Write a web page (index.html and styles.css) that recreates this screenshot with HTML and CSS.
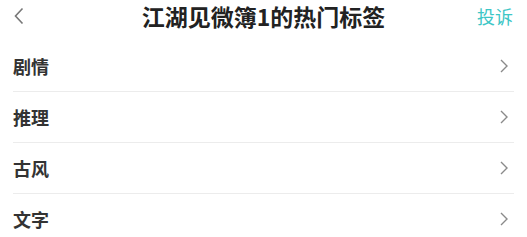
FILE: index.html
```html
<!DOCTYPE html>
<html lang="zh-CN">
<head>
    <meta charset="UTF-8">
    <meta name="viewport" content="width=device-width, initial-scale=1.0">
    <title>热门标签</title>
    <link rel="stylesheet" href="styles.css">
</head>
<body>

    <!-- Top bar -->
    <div class="header">
        <a class="back" href="#">
            <svg width="10" height="18" viewBox="0 0 10 18"><path d="M8.5 1.5 L1.5 9 L8.5 16.5" fill="none" stroke="#777" stroke-width="1.6"/></svg>
        </a>
        <h1 class="title">江湖见微簿1的热门标签</h1>
        <a class="report" href="#">投诉</a>
    </div>

    <!-- Tag list -->
    <ul class="tag-list">
        <li class="tag-row"><span>剧情</span><svg class="arrow" width="8" height="14" viewBox="0 0 8 14"><path d="M1 1 L7 7 L1 13" fill="none" stroke="#8a8a8a" stroke-width="1.4"/></svg></li>
        <li class="tag-row"><span>推理</span><svg class="arrow" width="8" height="14" viewBox="0 0 8 14"><path d="M1 1 L7 7 L1 13" fill="none" stroke="#8a8a8a" stroke-width="1.4"/></svg></li>
        <li class="tag-row"><span>古风</span><svg class="arrow" width="8" height="14" viewBox="0 0 8 14"><path d="M1 1 L7 7 L1 13" fill="none" stroke="#8a8a8a" stroke-width="1.4"/></svg></li>
        <li class="tag-row"><span>文字</span><svg class="arrow" width="8" height="14" viewBox="0 0 8 14"><path d="M1 1 L7 7 L1 13" fill="none" stroke="#8a8a8a" stroke-width="1.4"/></svg></li>
    </ul>

</body>
</html>
```

FILE: styles.css
```css
body {
    margin: 0;
    background: #fff;
    font-family: "Noto Sans CJK SC", "Noto Sans", sans-serif;
    color: #333;
}

/* Header */
.header {
    display: flex;
    align-items: center;
    justify-content: space-between;
    height: 31px;
    padding: 0 14px 0 14px;
    margin-bottom: 10px;
}

.back {
    display: flex;
    width: 60px;
}

.title {
    margin: 0;
    font-size: 23px;
    font-weight: bold;
    color: #222;
    line-height: 30px;
}

.report {
    width: 60px;
    text-align: right;
    text-decoration: none;
    color: #3cc6c6;
    font-size: 18px;
}

/* List */
.tag-list {
    list-style: none;
    margin: 0;
    padding: 0 13px;
}

.tag-row {
    display: flex;
    align-items: center;
    justify-content: space-between;
    height: 50px;
    padding-right: 6px;
    border-bottom: 1px solid #ececec;
    font-size: 18px;
    font-weight: bold;
    color: #333;
}

.tag-row:last-child {
    border-bottom: none;
}
```
